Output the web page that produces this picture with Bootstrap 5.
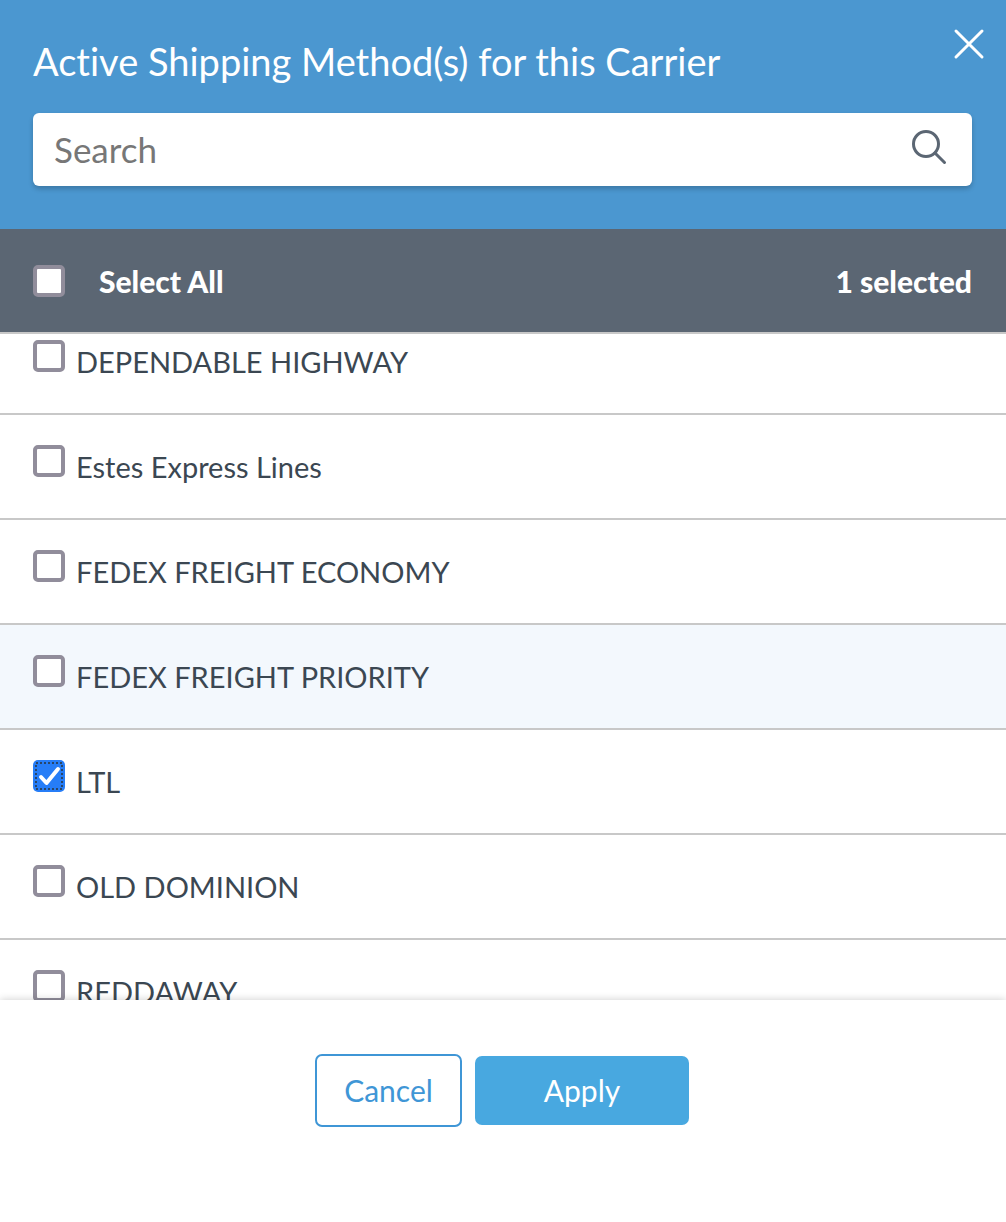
<!DOCTYPE html>
<html lang="en">
<head>
<meta charset="utf-8">
<meta name="viewport" content="width=device-width, initial-scale=1">
<title>Active Shipping Methods</title>
<link href="https://cdn.jsdelivr.net/npm/bootstrap@5.3.0/dist/css/bootstrap.min.css" rel="stylesheet">
<style>
  body { font-family: Lato, "Open Sans", sans-serif; font-variant-ligatures: none; color: #3b4752; font-size: 29px; line-height: 36px; }
  .panel-head { background: #4b97d0; padding: 37px 34px 43px 33px; }
  .panel-title { font-size: 38px; line-height: 48px; margin-bottom: 28px; font-weight: 400; }
  .close-btn { top: 28px; right: 21px; width: 32px; height: 32px; line-height: 0; }
  .search-box { border-radius: 6px; box-shadow: 0 3px 5px rgba(0,0,0,.2); padding: 0 25px 5px 21px; height: 73px; }
  .search-box input { font-size: 35px; line-height: 44px; color: #3b4752; outline: 0; min-width: 0; padding: 3px 0 0; }
  .search-box input::placeholder { color: #777; }
  .select-bar { background: #5b6673; padding: 0 34px 0 33px; height: 103px; font-weight: 900; font-size: 30px; }
  .select-bar label { gap: 34px; }
  .tick { appearance: none; flex: none; width: 32px; height: 32px; margin: 0; border: 4px solid #918d9b; border-radius: 5px; background: #fff; }
  .tick:checked { border: 0; background: #267df7 url("data:image/svg+xml,%3Csvg xmlns='http://www.w3.org/2000/svg' viewBox='0 0 32 32' fill='none'%3E%3Crect x='3' y='3' width='26' height='26' stroke='%23294668' stroke-width='2' stroke-dasharray='2 2'/%3E%3Cpath d='M8 17l5.500 6L25 9' stroke='white' stroke-width='4' stroke-linecap='round' stroke-linejoin='round'/%3E%3C/svg%3E"); }
  .method-view { border-top: 2px solid #c8c8c8; min-height: 0; }
  /* the list is scrolled a little way into its first row */
  .method-list { margin-top: -24px; }
  .method-list li { border-bottom: 2px solid #c8c8c8; }
  .method-list li.hovered { background: #f3f8fd; }
  .method-list label { gap: 11px; padding: 30px 33px 33px; }
  .method-list span { padding-top: 4px; }
  .panel-foot { padding: 54px 33px 95px 31px; gap: 13px; box-shadow: 0 0 8px rgba(0,0,0,.2); z-index: 1; }
  .panel-foot .btn { font-size: 30px; line-height: 39px; border-radius: 7px; }
  .btn-cancel { border: 2px solid #3f96d6; color: #3f96d6; width: 147px; padding: 15px 0; }
  .btn-apply, .btn-apply:hover { background: #48a8e0; color: #fff; width: 214px; padding: 15px 0; }
</style>
<script src="https://cdn.jsdelivr.net/npm/bootstrap@5.3.0/dist/js/bootstrap.bundle.min.js"></script>
</head>
<body>
<main class="d-flex flex-column vh-100 overflow-hidden bg-white">
  <header class="panel-head position-relative flex-shrink-0">
    <h1 class="panel-title text-white">Active Shipping Method(s) for this Carrier</h1>
    <button type="button" class="close-btn position-absolute border-0 bg-transparent p-0" aria-label="Close">
      <svg width="32" height="32" viewBox="0 0 32 32" fill="none" stroke="#fff" stroke-width="3" stroke-linecap="round"><path d="M3 3l26 26M29 3L3 29"/></svg>
    </button>
    <div class="search-box bg-white d-flex align-items-center">
      <input type="search" class="flex-grow-1 border-0 bg-transparent" placeholder="Search" aria-label="Search">
      <svg width="36" height="36" viewBox="0 0 36 36" fill="none" stroke="#5b6673" stroke-width="3" stroke-linecap="round" aria-hidden="true"><circle cx="15" cy="15" r="12.500"/><path d="M24 24l9.500 9.500"/></svg>
    </div>
  </header>
  <div class="select-bar text-white d-flex align-items-center justify-content-between flex-shrink-0">
    <label class="d-flex align-items-center"><input type="checkbox" class="tick">Select All</label>
    <div>1 selected</div>
  </div>
  <section class="method-view flex-grow-1 overflow-hidden">
    <ul class="method-list list-unstyled mb-0">
      <li><label class="d-flex"><input type="checkbox" class="tick"><span>DEPENDABLE HIGHWAY</span></label></li>
      <li><label class="d-flex"><input type="checkbox" class="tick"><span>Estes Express Lines</span></label></li>
      <li><label class="d-flex"><input type="checkbox" class="tick"><span>FEDEX FREIGHT ECONOMY</span></label></li>
      <li class="hovered"><label class="d-flex"><input type="checkbox" class="tick"><span>FEDEX FREIGHT PRIORITY</span></label></li>
      <li><label class="d-flex"><input type="checkbox" class="tick" checked><span>LTL</span></label></li>
      <li><label class="d-flex"><input type="checkbox" class="tick"><span>OLD DOMINION</span></label></li>
      <li><label class="d-flex"><input type="checkbox" class="tick"><span>REDDAWAY</span></label></li>
    </ul>
  </section>
  <footer class="panel-foot bg-white position-relative d-flex justify-content-center align-items-center flex-shrink-0">
    <button type="button" class="btn btn-cancel">Cancel</button>
    <button type="button" class="btn btn-apply border-0">Apply</button>
  </footer>
</main>
</body>
</html>
